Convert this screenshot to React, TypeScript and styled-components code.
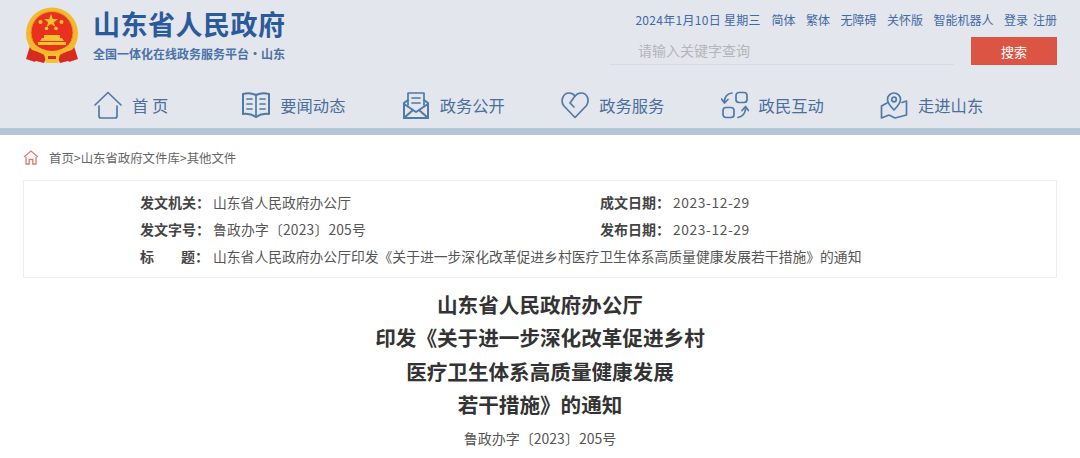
import * as React from 'react';
import styled, { createGlobalStyle } from 'styled-components';

const GlobalStyle = createGlobalStyle`
  html, body {
    margin: 0;
    padding: 0;
    background: #fff;
    font-family: 'Noto Sans CJK SC', 'Noto Sans', sans-serif;
  }
`;

const Emblem = () => (
  <svg width='54' height='57' viewBox='0 0 54 57'>
    <path d='M6 36 L1 52 L10 55 L16 45 Z' fill='#d92a20' />
    <path d='M48 36 L53 52 L44 55 L38 45 Z' fill='#d92a20' />
    <circle cx='27' cy='26.5' r='26' fill='#f2b92c' />
    <circle cx='27' cy='25.5' r='21' fill='#e8321f' stroke='#e59d1d' strokeWidth='1' />
    <polygon points='26,7 27.8,12 33,12 28.8,15.2 30.4,20 26,17 21.6,20 23.2,15.2 19,12 24.2,12' fill='#f6c32e' />
    <circle cx='15.5' cy='15' r='2' fill='#f6c32e' />
    <circle cx='36.5' cy='15' r='2' fill='#f6c32e' />
    <circle cx='21.5' cy='21.5' r='1.8' fill='#f6c32e' />
    <circle cx='31' cy='21.5' r='1.8' fill='#f6c32e' />
    <path d='M19 28 h16 v3 h-16 Z M17 31 h20 l2 3 h-24 Z M13 35 h28 v3 h-28 Z' fill='#f6c32e' />
    <path d='M8 36 Q27 52 46 36 L48 41 Q27 57 6 41 Z' fill='#f2b92c' />
    <path d='M7 43 Q17 46 22 50 L19 56 L7 53 Z M47 43 Q37 46 32 50 L35 56 L47 53 Z' fill='#d92a20' />
    <path d='M19 47 h16 l-2 9 h-12 Z' fill='#f6c32e' />
    <path d='M23 49 h8 v3 h-8 Z' fill='#d92a20' />
  </svg>
);

const NavSvg = styled.svg.attrs({ fill: 'none', viewBox: '0 0 28 28' })`
  width: 28px;
  height: 28px;
  flex: none;
  stroke: #4f7aa8;
  stroke-width: 1.7;
  stroke-linecap: round;
  stroke-linejoin: round;
`;

const HomeIcon = () => (
  <NavSvg>
    <path d='M1 14 L14 1.5 L27 14' />
    <path d='M5 15 V25 Q5 27 7 27 H21 Q23 27 23 25 V15' />
  </NavSvg>
);

const BookIcon = () => (
  <NavSvg>
    <path d='M1 3 Q8 1 14 4 Q20 1 27 3 V23 Q20 22 14 26 Q8 22 1 23 Z' strokeWidth='2' />
    <path d='M14 4 V26 M5 8 H10 M5 13 H10 M5 18 H10 M18 8 H23 M18 13 H23 M18 18 H23' />
  </NavSvg>
);

const MailIcon = () => (
  <NavSvg>
    <path d='M6 14 V2 H22 V14' />
    <path d='M10 7 H18 M10 12 H18' />
    <path d='M2 12 L6 9 M26 12 L22 9 M2 12 V27 H26 V12' strokeWidth='2' />
    <path d='M2 13 L14 21 L26 13 M2 27 L11 19 M26 27 L17 19' strokeWidth='2' />
  </NavSvg>
);

const HeartIcon = () => (
  <NavSvg>
    <path d='M14 26.5 L3 15 C-1 10 2 2 8 2 C11 2 13 3.5 14 5 C15.5 3 18 2 20.5 2 C26 2 29 9 25.5 14.5 Z' />
    <path d='M14 5 L9 12 L13 16' />
  </NavSvg>
);

const ExchangeIcon = () => (
  <NavSvg strokeWidth='2'>
    <rect x='15' y='1.5' width='11' height='10' rx='3' />
    <rect x='2' y='16.5' width='11' height='10' rx='3' />
    <path d='M11 2 Q4 3 3.5 10 M0.5 8 L3.5 12 L7 8.5' />
    <path d='M17 26.5 Q24 25 24.5 18 M21 19.5 L24.5 15.5 L27.5 19.5' />
  </NavSvg>
);

const MapIcon = () => (
  <NavSvg strokeWidth='1.5'>
    <path d='M14 19 C10 15 7.5 12 7.5 8.5 A6.5 6.5 0 0 1 20.5 8.5 C20.5 12 18 15 14 19 Z' />
    <circle cx='14' cy='8.5' r='2.3' />
    <path d='M7 12 L1.5 15 V27 L9 24 L15 27 L26.5 24 V10 L22 11.5' />
  </NavSvg>
);

const SmallHome = () => (
  <svg width='16' height='15' viewBox='0 0 16 15' fill='none' stroke='#e07a70' strokeWidth='1.3'>
    <path d='M1 7 L8 1 L15 7' />
    <path d='M3 7 V14 H6.2 V9.5 H9.8 V14 H13 V7' />
  </svg>
);

const links = ['简体', '繁体', '无障碍', '关怀版', '智能机器人'];

const navItems = [
  { label: '首 页', icon: <HomeIcon />, wide: true },
  { label: '要闻动态', icon: <BookIcon /> },
  { label: '政务公开', icon: <MailIcon /> },
  { label: '政务服务', icon: <HeartIcon /> },
  { label: '政民互动', icon: <ExchangeIcon /> },
  { label: '走进山东', icon: <MapIcon /> },
];

export default function App() {
  return (
    <Page>
      <GlobalStyle />
      <Header>
        <TopRow>
          <Brand>
            <Emblem />
            <BrandText>
              <BrandTitle>山东省人民政府</BrandTitle>
              <BrandSub>全国一体化在线政务服务平台·山东</BrandSub>
            </BrandText>
          </Brand>
          <Tools>
            <TopLinks>
              <DateText>2024年1月10日 星期三</DateText>
              {links.map((l) => (
                <span key={l}>{l}</span>
              ))}
              <Account>
                <span>登录</span>
                <span>注册</span>
              </Account>
            </TopLinks>
            <SearchRow>
              <SearchInput placeholder='请输入关键字查询' readOnly />
              <SearchButton>搜索</SearchButton>
            </SearchRow>
          </Tools>
        </TopRow>
        <Nav>
          {navItems.map((n) => (
            <NavItem key={n.label} $wide={n.wide}>
              {n.icon}
              <span>{n.label}</span>
            </NavItem>
          ))}
        </Nav>
      </Header>
      <Main>
        <Crumbs>
          <SmallHome />
          <span>首页&gt;山东省政府文件库&gt;其他文件</span>
        </Crumbs>
        <MetaBox>
          <MetaField>
            <b>发文机关：</b>
            <span>山东省人民政府办公厅</span>
          </MetaField>
          <MetaField>
            <b>成文日期：</b>
            <MetaDate>2023-12-29</MetaDate>
          </MetaField>
          <MetaField>
            <b>发文字号：</b>
            <MetaNumber>鲁政办字〔2023〕205号</MetaNumber>
          </MetaField>
          <MetaField>
            <b>发布日期：</b>
            <MetaDate>2023-12-29</MetaDate>
          </MetaField>
          <MetaField $full>
            <b>
              <i>标</i>
              <i>题：</i>
            </b>
            <span>山东省人民政府办公厅印发《关于进一步深化改革促进乡村医疗卫生体系高质量健康发展若干措施》的通知</span>
          </MetaField>
        </MetaBox>
        <DocTitle>
          山东省人民政府办公厅
          <br />
          印发《关于进一步深化改革促进乡村
          <br />
          医疗卫生体系高质量健康发展
          <br />
          若干措施》的通知
        </DocTitle>
        <DocNumber>鲁政办字〔2023〕205号</DocNumber>
      </Main>
    </Page>
  );
}

const Page = styled.div`
  width: 1080px;
  height: 458px;
  overflow: hidden;
`;

const Header = styled.header`
  height: 128px;
  background: #e3e6ec;
  border-bottom: 7px solid #b3c5d7;
`;

const TopRow = styled.div`
  display: flex;
  justify-content: space-between;
  padding: 7px 23px 0 25px;
  height: 73px;
  box-sizing: border-box;
`;

const Brand = styled.div`
  display: flex;
  gap: 14px;
`;

const BrandText = styled.div`
  display: flex;
  flex-direction: column;
`;

const BrandTitle = styled.div`
  font-size: 27px;
  line-height: 36px;
  margin-top: -1px;
  font-weight: 700;
  letter-spacing: 0.5px;
  color: #2b5a9b;
`;

const BrandSub = styled.div`
  font-size: 12px;
  line-height: 16px;
  margin-top: 4px;
  font-weight: 700;
  color: #4a72a8;
  white-space: nowrap;
`;

const Tools = styled.div`
  width: 447px;
  display: flex;
  flex-direction: column;
  align-items: flex-end;
`;

const TopLinks = styled.div`
  display: flex;
  gap: 10.5px;
  font-size: 12px;
  line-height: 16px;
  margin-top: 5px;
  color: #3f6aa5;
  white-space: nowrap;
`;

const DateText = styled.span`
  letter-spacing: 0.3px;
`;

const Account = styled.div`
  display: flex;
  gap: 5px;
`;

const SearchRow = styled.div`
  display: flex;
  justify-content: space-between;
  align-items: flex-end;
  width: 100%;
  margin-top: 9px;
`;

const SearchInput = styled.input`
  width: 344px;
  height: 28px;
  box-sizing: border-box;
  padding: 0 0 2px 28px;
  border: 0;
  border-bottom: 1px solid #d3dbe7;
  background: transparent;
  outline: 0;
  font: inherit;
  font-size: 14px;

  &::placeholder {
    color: #b4b6b9;
    opacity: 1;
  }
`;

const SearchButton = styled.button`
  width: 86px;
  height: 28px;
  padding: 0;
  border: 0;
  background: #dc5544;
  color: #fff;
  font: inherit;
  font-size: 13px;
`;

const Nav = styled.nav`
  display: flex;
  gap: 56.3px;
  padding: 17px 0 0 94px;
`;

const NavItem = styled.div<{ $wide?: boolean }>`
  display: flex;
  align-items: center;
  gap: 10px;
  width: ${(p) => (p.$wide ? '92px' : 'auto')};
  height: 30px;
  font-size: 16.3px;
  color: #4a6f9c;
  white-space: nowrap;
`;

const Main = styled.main`
  padding: 0 23px;
`;

const Crumbs = styled.div`
  display: flex;
  align-items: center;
  gap: 10px;
  height: 45px;
  font-size: 12.4px;
  color: #666;
`;

const MetaBox = styled.div`
  display: grid;
  grid-template-columns: 460px 1fr;
  grid-auto-rows: 27px;
  align-content: center;
  height: 98px;
  box-sizing: border-box;
  padding: 0 0 0 116px;
  border: 1px solid #eee;
  font-size: 14px;
  color: #555;
`;

const MetaField = styled.div<{ $full?: boolean }>`
  display: flex;
  align-items: center;
  grid-column: ${(p) => (p.$full ? '1 / -1' : 'auto')};
  white-space: nowrap;

  b {
    display: flex;
    justify-content: space-between;
    width: 73px;
    flex: none;
    color: #444;
  }

  i {
    font-style: normal;
  }

  i:last-child {
    margin-right: 4px;
  }

  span {
    font-size: 13.8px;
  }
`;

const MetaDate = styled.span`
  letter-spacing: 0.6px;
`;

const MetaNumber = styled.span`
  letter-spacing: 0.2px;
`;

const DocTitle = styled.h1`
  margin: 10px 0 0;
  font-size: 20.6px;
  line-height: 33.4px;
  font-weight: 700;
  text-align: center;
  color: #333;
`;

const DocNumber = styled.div`
  margin-top: 6px;
  font-size: 14px;
  line-height: 20px;
  text-align: center;
  color: #555;
`;
